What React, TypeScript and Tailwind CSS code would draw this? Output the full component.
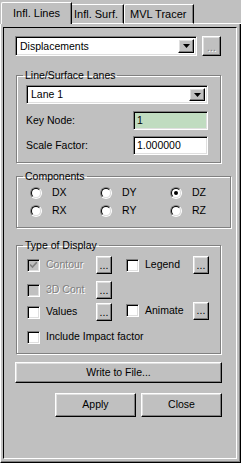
import React from "react";

const raised =
  "border border-t-white border-l-white border-r-black border-b-black shadow-[inset_-1px_-1px_0_#808080,inset_1px_1px_0_#dfdfdf] bg-[#c0c0c0]";
const sunken =
  "border border-t-[#808080] border-l-[#808080] border-r-white border-b-white shadow-[inset_1px_1px_0_#000,inset_-1px_-1px_0_#dfdfdf]";
const etched =
  "border border-[#808080] shadow-[inset_1px_1px_0_#fff,1px_1px_0_#fff]";
const disabledText = "text-[#808080] [text-shadow:1px_1px_0_#fff]";

function Arrow() {
  return (
    <svg width="7" height="4" viewBox="0 0 7 4">
      <path d="M0 0h7L3.5 4z" fill="#000" />
    </svg>
  );
}

function Combo({ value, className }: { value: string; className: string }) {
  return (
    <div className={`${sunken} bg-white flex items-stretch p-[2px] ${className}`}>
      <span className="flex-1 pl-[2px] leading-none flex items-center">{value}</span>
      <div className={`${raised} w-[16px] flex items-center justify-center`}>
        <Arrow />
      </div>
    </div>
  );
}

function Dots({ disabled, className }: { disabled?: boolean; className: string }) {
  return (
    <div className={`${raised} flex items-end justify-center pb-[3px] leading-none ${className}`}>
      <span className={disabled ? disabledText : ""}>...</span>
    </div>
  );
}

function Radio({ label, checked }: { label: string; checked?: boolean }) {
  return (
    <div className="flex items-center h-[13px]">
      <div className="w-[12px] h-[12px] rounded-full border border-t-[#808080] border-l-[#808080] border-r-white border-b-white">
        <div className="w-full h-full rounded-full border border-t-black border-l-black border-r-[#dfdfdf] border-b-[#dfdfdf] bg-white flex items-center justify-center">
          {checked && <div className="w-[4px] h-[4px] rounded-full bg-black" />}
        </div>
      </div>
      <span className="ml-[10px]">{label}</span>
    </div>
  );
}

function Check({
  label,
  checked,
  disabled,
  className,
}: {
  label: string;
  checked?: boolean;
  disabled?: boolean;
  className?: string;
}) {
  return (
    <div className={`flex items-center ${className ?? ""}`}>
      <div
        className={`${sunken} w-[13px] h-[13px] flex items-center justify-center ${
          disabled ? "bg-[#c0c0c0]" : "bg-white"
        }`}
      >
        {checked && (
          <svg width="7" height="7" viewBox="0 0 7 7">
            <path d="M0 2.5l2.5 2.5L7 0" stroke={disabled ? "#808080" : "#000"} strokeWidth="1.6" fill="none" />
          </svg>
        )}
      </div>
      <span className={`ml-[6px] ${disabled ? disabledText : ""}`}>{label}</span>
    </div>
  );
}

export default function App() {
  return (
    <div className="w-[241px] h-[463px] bg-[#c0c0c0] text-black font-['Liberation_Sans',Arial,sans-serif] text-[10.5px] flex flex-col">
      {/* tabs */}
      <div className="flex items-end h-[24px] pt-[2px]">
        <div className="ml-[1px] h-[22px] w-[71px] border-l border-t border-white border-r border-r-black rounded-tl-[2px] shadow-[inset_-1px_0_0_#808080] flex items-center pl-[11px] text-[11px]">
          Infl. Lines
        </div>
        <div className="h-[20px] w-[52px] border-t border-t-white border-r border-r-black border-b border-b-white shadow-[inset_-1px_0_0_#808080] flex items-center pl-[2px] text-[11px]">
          Infl. Surf.
        </div>
        <div className="h-[20px] w-[70px] border-t border-l border-white border-r border-r-black border-b border-b-white rounded-tl-[2px] shadow-[inset_-1px_0_0_#808080] flex items-center pl-[5px] text-[11px]">
          MVL Tracer
        </div>
        <div className="flex-1 h-px bg-white" />
      </div>

      {/* panel */}
      <div className="flex-1 border-l border-l-white border-r border-r-black border-b border-b-black shadow-[inset_-1px_-1px_0_#808080] p-[2px] pt-[3px] pr-[3px] pb-[3px] flex">
        <div className="flex-1 border border-t-black border-l-black border-r-white border-b-white pl-[11px] pt-[8px] flex flex-col">
          {/* result type */}
          <div className="flex items-stretch h-[20px]">
            <Combo value="Displacements" className="w-[182px]" />
            <Dots disabled className="ml-[5px] w-[19px]" />
          </div>

          {/* Line/Surface Lanes */}
          <fieldset className={`${etched} ml-[1px] w-[205px] mt-[13px] pb-[7px]`}>
            <legend className="ml-[6px] px-[2px] leading-[13px]">Line/Surface Lanes</legend>
            <Combo value="Lane 1" className="ml-[9px] mt-[3px] w-[182px] h-[19px]" />
            <div className="flex items-center mt-[7px] h-[19px]">
              <span className="ml-[9px] w-[107px]">Key Node:</span>
              <div className={`${sunken} bg-[#c0dcc0] w-[75px] h-full flex items-center pl-[3px]`}>1</div>
            </div>
            <div className="flex items-center mt-[6px] h-[19px]">
              <span className="ml-[9px] w-[107px]">Scale Factor:</span>
              <div className={`${sunken} bg-white w-[75px] h-full flex items-center pl-[3px]`}>1.000000</div>
            </div>
          </fieldset>

          {/* Components */}
          <fieldset className={`${etched} ml-[1px] w-[205px] mt-[7px] pb-[10px]`}>
            <legend className="ml-[6px] px-[2px] leading-[13px]">Components</legend>
            <div className="grid grid-cols-[70px_70px_60px] gap-y-[5px] ml-[13px] mt-[3px]">
              <Radio label="DX" />
              <Radio label="DY" />
              <Radio label="DZ" checked />
              <Radio label="RX" />
              <Radio label="RY" />
              <Radio label="RZ" />
            </div>
          </fieldset>

          {/* Type of Display */}
          <fieldset className={`${etched} ml-[1px] w-[205px] mt-[11px] pb-[8px]`}>
            <legend className="ml-[6px] px-[2px] leading-[13px]">Type of Display</legend>
            <div className="flex items-center ml-[10px] mt-[4px] h-[18px]">
              <Check label="Contour" checked disabled className="w-[69px]" />
              <Dots className="w-[16px] h-[18px]" />
              <Check label="Legend" className="ml-[14px] w-[67px]" />
              <Dots className="w-[16px] h-[18px]" />
            </div>
            <div className="flex items-center ml-[10px] mt-[7px] h-[18px]">
              <Check label="3D Cont" disabled className="w-[69px]" />
              <Dots className="w-[16px] h-[18px]" />
            </div>
            <div className="flex items-center ml-[10px] mt-[4px] h-[18px]">
              <Check label="Values" className="w-[69px]" />
              <Dots className="w-[16px] h-[18px]" />
              <Check label="Animate" className="ml-[14px] w-[67px] -mt-[3px]" />
              <Dots className="w-[16px] h-[18px] -mt-[3px]" />
            </div>
            <div className="flex items-center ml-[10px] mt-[8px] h-[16px]">
              <Check label="Include Impact factor" />
            </div>
          </fieldset>

          <div className={`${raised} mt-[8px] w-[207px] h-[21px] flex items-center justify-center`}>
            Write to File...
          </div>

          <div className="flex gap-[5px] mt-[10px] ml-[40px]">
            <div className={`${raised} w-[81px] h-[24px] flex items-center justify-center`}>Apply</div>
            <div className={`${raised} w-[81px] h-[24px] flex items-center justify-center`}>Close</div>
          </div>
        </div>
      </div>
    </div>
  );
}
